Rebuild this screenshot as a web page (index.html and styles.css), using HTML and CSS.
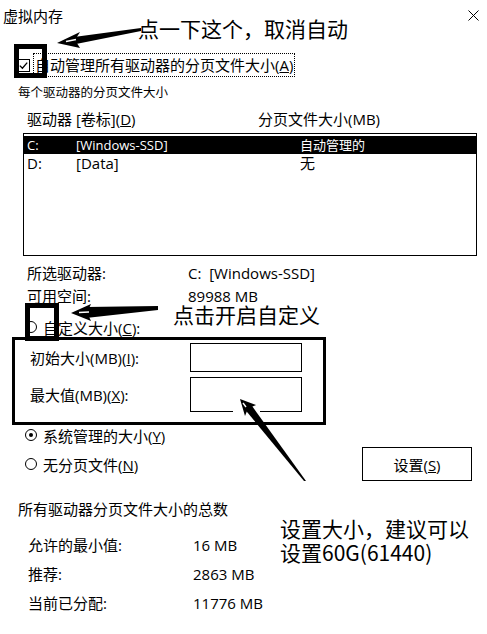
FILE: index.html
```html
<!DOCTYPE html>
<html lang="zh-CN">
<head>
<meta charset="utf-8">
<title>虚拟内存</title>
<link rel="stylesheet" href="styles.css">
</head>
<body>
<div class="dialog">
  <div class="titlebar">
    <span class="title">虚拟内存</span>
    <svg class="close" width="11" height="11" viewBox="0 0 11 11"><path d="M0.5 0.5 L10.5 10.5 M10.5 0.5 L0.5 10.5" stroke="#000" stroke-width="1" fill="none"/></svg>
  </div>

  <div class="auto-row">
    <svg class="checkbox" width="13" height="13" viewBox="0 0 13 13"><rect x="0.5" y="0.5" width="12" height="12" fill="#fff" stroke="#000"/><path d="M2.8 6.6 L5.4 9.2 L10.2 3.6" fill="none" stroke="#000" stroke-width="1.3"/></svg>
    <span class="auto-label">自动管理所有驱动器的分页文件大小(<u>A</u>)</span>
  </div>

  <div class="group-title">每个驱动器的分页文件大小</div>

  <div class="list-head"><span>驱动器 [卷标](<u>D</u>)</span><span>分页文件大小(MB)</span></div>

  <div class="listbox">
    <div class="list-row selected"><span>C:</span><span>[Windows-SSD]</span><span>自动管理的</span></div>
    <div class="list-row"><span>D:</span><span>[Data]</span><span>无</span></div>
  </div>

  <div class="info-row first"><span>所选驱动器:</span><span>C:&nbsp; [Windows-SSD]</span></div>
  <div class="info-row second"><span>可用空间:</span><span>89988 MB</span></div>

  <div class="radio-row custom"><span class="radio"></span><span>自定义大小(<u>C</u>):</span></div>

  <div class="size-row first"><span>初始大小(MB)(<u>I</u>):</span><span class="input"></span></div>
  <div class="size-row second"><span>最大值(MB)(<u>X</u>):</span><span class="input"></span></div>

  <div class="radio-row system"><span class="radio checked"></span><span>系统管理的大小(<u>Y</u>)</span></div>
  <div class="radio-row nopage"><span class="radio"></span><span>无分页文件(<u>N</u>)</span><button class="btn" type="button">设置(<u>S</u>)</button></div>

  <div class="total-title">所有驱动器分页文件大小的总数</div>
  <div class="total-row first"><span>允许的最小值:</span><span>16 MB</span></div>
  <div class="total-row"><span>推荐:</span><span>2863 MB</span></div>
  <div class="total-row"><span>当前已分配:</span><span>11776 MB</span></div>
</div>

<svg class="annot" width="487" height="634" viewBox="0 0 487 634">
  <rect x="16.5" y="46.5" width="28" height="29" fill="none" stroke="#000" stroke-width="5"/>
  <rect x="27.5" y="305.5" width="29" height="33" fill="none" stroke="#000" stroke-width="5"/>
  <rect x="13.5" y="338.5" width="311" height="85" fill="none" stroke="#000" stroke-width="3"/>
  <!-- arrow 1 -->
  <polygon points="74,37 141,28 141,31 76,44" fill="#000"/>
  <polygon points="57,43 80,32 75,40 80,48" fill="#000"/>
  <path d="M66 41.5 L76 39.5" stroke="#fff" stroke-width="1.4"/>
  <!-- arrow 2 -->
  <polygon points="86,307 158,306 158,310 86,318" fill="#000"/>
  <polygon points="71,313 91,304 87,312.5 91,321" fill="#000"/>
  <path d="M79 312.5 L89 312" stroke="#fff" stroke-width="1.4"/>
  <!-- arrow 3 -->
  <rect x="233" y="410" width="27" height="4" fill="#fff"/>
  <polygon points="251,404.5 306,481 304,481 245,409.5" fill="#000"/>
  <polygon points="240,399 256,405 248,408.5 245,416" fill="#000"/>
  <path d="M243 403 L246 407" stroke="#fff" stroke-width="1.4"/>
</svg>

<div class="note note1">点一下这个，取消自动</div>
<div class="note note2">点击开启自定义</div>
<div class="note note3a">设置大小，建议可以</div>
<div class="note note3b">设置60G(61440)</div>
</body>
</html>
```

FILE: styles.css
```css
html, body {
  margin: 0;
  padding: 0;
}
body {
  width: 487px;
  height: 634px;
  position: relative;
  overflow: hidden;
  background: #fff;
  color: #000;
  font-family: "Open Sans", "Noto Sans CJK SC", sans-serif;
  font-size: 15px;
}
u { text-decoration: underline; text-underline-offset: 1px; }

.dialog { width: 487px; }

.titlebar {
  height: 30px;
  display: flex;
  align-items: center;
  justify-content: space-between;
  padding: 0 8px 0 3px;
}
.close { display: block; }

.auto-row {
  margin-top: 23px;
  height: 24px;
  display: flex;
  align-items: center;
  padding-left: 17px;
}
.checkbox { display: block; flex: none; }
.auto-label {
  margin-left: 3px;
  height: 22px;
  line-height: 22px;
  padding: 0 1px;
  border: 1px dotted #000;
}

.group-title {
  margin-top: 7px;
  height: 18px;
  line-height: 18px;
  padding-left: 18px;
  font-size: 12.5px;
}

.list-head {
  margin-top: 8px;
  height: 18px;
  line-height: 18px;
  padding-left: 27px;
  display: grid;
  grid-template-columns: 231px 1fr;
}

.listbox {
  margin: 5px 0 0 23px;
  width: 454px;
  height: 123px;
  box-sizing: border-box;
  border: 1px solid #000;
  padding-top: 2px;
}
.list-row {
  height: 18px;
  line-height: 18px;
  display: grid;
  grid-template-columns: 49px 224px 1fr;
  padding-left: 3px;
}
.list-row.selected {
  background: #000;
  color: #fff;
  font-size: 13px;
}

.info-row {
  height: 18px;
  line-height: 18px;
  display: grid;
  grid-template-columns: 161px 1fr;
  padding-left: 27px;
}
.info-row.first { margin-top: 8px; }
.info-row.second { margin-top: 5px; }

.radio-row {
  display: flex;
  align-items: center;
  padding-left: 25px;
  height: 18px;
}
.radio {
  flex: none;
  width: 12px;
  height: 12px;
  box-sizing: border-box;
  border: 1px solid #000;
  border-radius: 50%;
  margin-right: 6px;
  position: relative;
}
.radio.checked::after {
  content: "";
  position: absolute;
  left: 3px;
  top: 3px;
  width: 4px;
  height: 4px;
  border-radius: 50%;
  background: #000;
}
.radio-row.custom { margin-top: 13px; }
.radio-row.system { margin-top: 14px; }
.radio-row.nopage {
  margin-top: 3px;
  height: 34px;
  padding-right: 15px;
}

.size-row {
  display: grid;
  grid-template-columns: 160px 112px;
  align-items: center;
  padding-left: 30px;
}
.size-row.first { margin-top: 7px; height: 29px; }
.size-row.second { margin-top: 5px; height: 35px; }
.input {
  display: block;
  height: 100%;
  box-sizing: border-box;
  border: 1px solid #000;
  background: #fff;
}

.btn {
  margin-left: auto;
  width: 110px;
  height: 34px;
  box-sizing: border-box;
  border: 1px solid #000;
  background: #fff;
  color: #000;
  font-family: inherit;
  font-size: 15px;
  padding: 0;
}

.total-title {
  margin-top: 19px;
  height: 18px;
  line-height: 18px;
  padding-left: 18px;
}
.total-row {
  margin-top: 11px;
  height: 18px;
  line-height: 18px;
  display: grid;
  grid-template-columns: 165px 1fr;
  padding-left: 28px;
}
.total-row.first { margin-top: 18px; }

.annot {
  position: absolute;
  left: 0;
  top: 0;
  pointer-events: none;
}

.note {
  position: absolute;
  font-family: "Noto Sans CJK SC", sans-serif;
  font-size: 21px;
  line-height: 24px;
  white-space: nowrap;
}
.note1 { left: 138px; top: 16px; }
.note2 { left: 173px; top: 302px; }
.note3a { left: 280px; top: 516px; }
.note3b { left: 280px; top: 540px; }
```
